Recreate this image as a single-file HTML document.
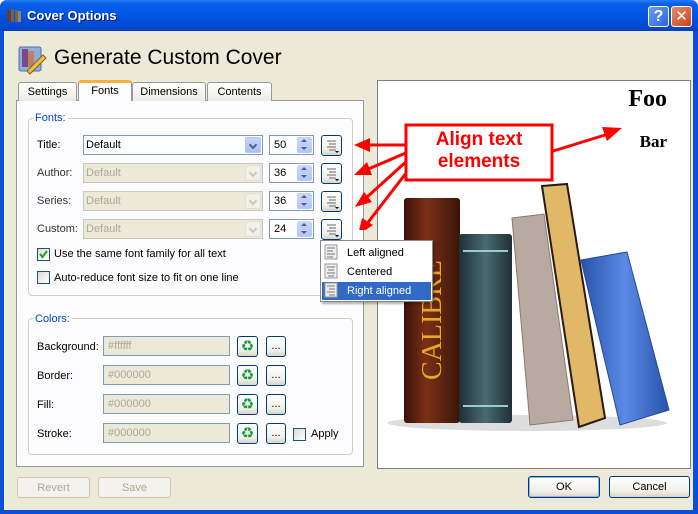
<!DOCTYPE html>
<html><head><meta charset="utf-8"><style>
*{margin:0;padding:0;box-sizing:border-box}
body{width:698px;height:514px;overflow:hidden;font-family:"Liberation Sans","DejaVu Sans",sans-serif;font-size:11px;background:#fff;position:relative}
.a{position:absolute}
.win{left:0;top:0;width:698px;height:514px;background:#0b4fd8;border-radius:7px 7px 0 0}
.tb{left:0;top:0;width:698px;height:31px;border-radius:7px 7px 0 0;background:linear-gradient(#2a7cf4 0,#0a5fe8 12%,#0054e3 50%,#0048d0 90%,#0a3fb8 100%)}
.body{left:4px;top:31px;width:689px;height:479px;background:#ECE9D8}
.lbl{color:#000;font-size:11px}
.cmb{height:20px;border:1px solid #7f9db9;background:#fff;font-size:11px;padding:3px 0 0 2px}
.cmb.d{background:#ECE9D8;color:#aca899;border-color:#c9c7ba}
.dd{position:absolute;right:1px;top:1px;width:16px;height:16px;border-radius:2px;background:linear-gradient(#c6d4fb,#a8bff5);border:1px solid #b4c8f6}
.dd::after{content:"";position:absolute;left:4px;top:4px;width:4px;height:4px;border-right:2px solid #4d6185;border-bottom:2px solid #4d6185;transform:rotate(45deg)}
.dd.d{background:#f0efe8;border-color:#e0dfd6}
.dd.d::after{border-color:#c9c7ba}
.spin{height:20px;border:1px solid #7f9db9;background:#fff;font-size:11px;padding:3px 0 0 4px}
.sb{position:absolute;right:1px;top:1px;width:15px;height:16px;background:linear-gradient(#cbd8fc,#b2c5f6);border-radius:2px}
.sb::before{content:"";position:absolute;left:4px;top:2px;border:3px solid transparent;border-bottom:3px solid #4d6185;border-top:none}
.sb::after{content:"";position:absolute;left:4px;top:10px;border:3px solid transparent;border-top:3px solid #4d6185;border-bottom:none}
.btn{border:1px solid #003c74;border-radius:3px;background:linear-gradient(#fff,#f0f0ea 70%,#d8d5c8);font-size:11px;text-align:center}
.btnd{border:1px solid #c9c7ba;border-radius:3px;background:#f3f2ec;color:#aca899;font-size:11px;text-align:center;padding-top:4px}
.grp{border:1px solid #d0d0bf;border-radius:4px}
.gl{background:#fcfcfe;color:#0046d5;padding:0 2px;font-size:11px}
.cb{width:13px;height:13px;border:1px solid #1c5180;background:linear-gradient(135deg,#dcdcd7,#fff)}
.txt{height:20px;border:1px solid #7f9db9;background:#ECE9D8;color:#aca899;padding:3px 0 0 4px}
</style></head><body>
<div class="a win"></div>
<div class="a tb"></div>
<div class="a" style="left:6px;top:7px;width:16px;height:16px">
<svg width="16" height="16"><rect x="1" y="3" width="3" height="12" fill="#6b3b22"/><rect x="5" y="2" width="3" height="13" fill="#8a5a30"/><rect x="9" y="3" width="3" height="12" fill="#5a6b6b"/><rect x="12" y="4" width="3" height="11" fill="#a88040"/></svg></div>
<div class="a" style="left:27px;top:8px;color:#fff;font-weight:bold;font-size:13px;text-shadow:1px 1px #0a1c6a">Cover Options</div>
<div class="a" style="left:648px;top:6px;width:21px;height:21px;border:1px solid #fff;border-radius:3px;background:linear-gradient(135deg,#6a9cf6,#2d63e0);color:#fff;font-weight:bold;font-size:16px;text-align:center;line-height:19px">?</div>
<div class="a" style="left:671px;top:6px;width:21px;height:21px;border:1px solid #fff;border-radius:3px;background:linear-gradient(135deg,#e88a6a,#c8431c);color:#fff;font-weight:bold;font-size:15px;text-align:center;line-height:19px">✕</div>
<div class="a body"></div>

<div class="a" style="left:17px;top:43px;width:30px;height:32px">
<svg width="30" height="32"><rect x="2" y="4" width="22" height="24" rx="2" fill="#8ab0e0" stroke="#5070a0"/><rect x="5" y="6" width="6" height="18" fill="#7a4a8a"/><rect x="11" y="8" width="6" height="16" fill="#c08060"/><path d="M10 28 L26 12 L29 15 L13 31 Z" fill="#f0c040" stroke="#806020"/></svg></div>
<div class="a" style="left:54px;top:46px;font-size:21px;color:#000">Generate Custom Cover</div>

<div class="a" style="left:16px;top:100px;width:348px;height:367px;background:#fcfcfe;border:1px solid #919b9c"></div>
<div class="a" style="left:18px;top:82px;width:59px;height:19px;border:1px solid #919b9c;border-bottom:none;border-radius:3px 3px 0 0;background:linear-gradient(#fff,#ecebe5);text-align:center;padding-top:3px">Settings</div>
<div class="a" style="left:78px;top:80px;width:54px;height:21px;border:1px solid #919b9c;border-top:3px solid #f8b040;border-bottom:none;border-radius:3px 3px 0 0;background:#fcfcfe;text-align:center;padding-top:2px">Fonts</div>
<div class="a" style="left:132px;top:82px;width:74px;height:19px;border:1px solid #919b9c;border-bottom:none;border-radius:3px 3px 0 0;background:linear-gradient(#fff,#ecebe5);text-align:center;padding-top:3px">Dimensions</div>
<div class="a" style="left:207px;top:82px;width:65px;height:19px;border:1px solid #919b9c;border-bottom:none;border-radius:3px 3px 0 0;background:linear-gradient(#fff,#ecebe5);text-align:center;padding-top:3px">Contents</div>

<div class="a grp" style="left:28px;top:118px;width:325px;height:178px"></div>
<div class="a gl" style="left:33px;top:112px">Fonts:</div>

<div class="a lbl" style="left:37px;top:139px">Title:</div>
<div class="a cmb" style="left:83px;top:135px;width:180px">Default<div class="dd"></div></div>
<div class="a lbl" style="left:37px;top:167px;color:#333">Author:</div>
<div class="a cmb d" style="left:83px;top:163px;width:180px">Default<div class="dd d"></div></div>
<div class="a lbl" style="left:37px;top:195px;color:#333">Series:</div>
<div class="a cmb d" style="left:83px;top:191px;width:180px">Default<div class="dd d"></div></div>
<div class="a lbl" style="left:37px;top:223px;color:#333">Custom:</div>
<div class="a cmb d" style="left:83px;top:219px;width:180px">Default<div class="dd d"></div></div>

<div class="a spin" style="left:269px;top:135px;width:45px">50<div class="sb"></div></div>
<div class="a spin" style="left:269px;top:163px;width:45px">36<div class="sb"></div></div>
<div class="a spin" style="left:269px;top:191px;width:45px">36<div class="sb"></div></div>
<div class="a spin" style="left:269px;top:219px;width:45px">24<div class="sb"></div></div>

<div class="a btn" style="left:321px;top:135px;width:21px;height:21px"><svg width="19" height="19"><g stroke="#666"><path d="M5 5h9M7 8h7M5 11h9M7 14h7"/></g><path d="M13 15h4l-2 2z" fill="#000"/></svg></div>
<div class="a btn" style="left:321px;top:163px;width:21px;height:21px"><svg width="19" height="19"><g stroke="#666"><path d="M5 5h9M7 8h7M5 11h9M7 14h7"/></g><path d="M13 15h4l-2 2z" fill="#000"/></svg></div>
<div class="a btn" style="left:321px;top:191px;width:21px;height:21px"><svg width="19" height="19"><g stroke="#666"><path d="M5 5h9M7 8h7M5 11h9M7 14h7"/></g><path d="M13 15h4l-2 2z" fill="#000"/></svg></div>
<div class="a btn" style="left:321px;top:219px;width:21px;height:21px"><svg width="19" height="19"><g stroke="#666"><path d="M5 5h9M7 8h7M5 11h9M7 14h7"/></g><path d="M13 15h4l-2 2z" fill="#000"/></svg></div>

<div class="a cb" style="left:37px;top:248px"><svg width="11" height="11"><path d="M2 5l2.5 3L9 2" stroke="#21a121" stroke-width="2" fill="none"/></svg></div>
<div class="a lbl" style="left:54px;top:248px">Use the same font family for all text</div>
<div class="a cb" style="left:37px;top:271px"></div>
<div class="a lbl" style="left:54px;top:272px">Auto-reduce font size to fit on one line</div>

<div class="a grp" style="left:28px;top:318px;width:325px;height:137px"></div>
<div class="a gl" style="left:33px;top:313px">Colors:</div>
<div class="a lbl" style="left:37px;top:341px">Background:</div>
<div class="a txt" style="left:103px;top:336px;width:127px">#ffffff</div>
<div class="a lbl" style="left:37px;top:370px">Border:</div>
<div class="a txt" style="left:103px;top:365px;width:127px">#000000</div>
<div class="a lbl" style="left:37px;top:399px">Fill:</div>
<div class="a txt" style="left:103px;top:394px;width:127px">#000000</div>
<div class="a lbl" style="left:37px;top:428px">Stroke:</div>
<div class="a txt" style="left:103px;top:423px;width:127px">#000000</div>

<div class="a btn" style="left:237px;top:336px;width:21px;height:21px;color:#1a9a3a;font-size:15px;line-height:19px">♻</div>
<div class="a btn" style="left:237px;top:365px;width:21px;height:21px;color:#1a9a3a;font-size:15px;line-height:19px">♻</div>
<div class="a btn" style="left:237px;top:394px;width:21px;height:21px;color:#1a9a3a;font-size:15px;line-height:19px">♻</div>
<div class="a btn" style="left:237px;top:423px;width:21px;height:21px;color:#1a9a3a;font-size:15px;line-height:19px">♻</div>
<div class="a btn" style="left:266px;top:336px;width:20px;height:21px;line-height:18px">...</div>
<div class="a btn" style="left:266px;top:365px;width:20px;height:21px;line-height:18px">...</div>
<div class="a btn" style="left:266px;top:394px;width:20px;height:21px;line-height:18px">...</div>
<div class="a btn" style="left:266px;top:423px;width:20px;height:21px;line-height:18px">...</div>
<div class="a cb" style="left:293px;top:428px"></div>
<div class="a lbl" style="left:311px;top:428px">Apply</div>

<div class="a btnd" style="left:17px;top:477px;width:73px;height:21px">Revert</div>
<div class="a btnd" style="left:98px;top:477px;width:73px;height:21px">Save</div>
<div class="a btn" style="left:528px;top:476px;width:72px;height:22px;padding-top:4px;border-color:#003c74;box-shadow:inset 0 0 0 1px #8cb4f2">OK</div>
<div class="a btn" style="left:609px;top:476px;width:81px;height:22px;padding-top:4px">Cancel</div>

<div class="a" style="left:377px;top:80px;width:314px;height:389px;background:#fff;border:1px solid #808080"></div>
<div class="a" style="left:600px;top:86px;width:67px;text-align:right;font-family:'Liberation Serif',serif;font-weight:bold;font-size:24px">Foo</div>
<div class="a" style="left:600px;top:132px;width:67px;text-align:right;font-family:'Liberation Serif',serif;font-weight:bold;font-size:17px">Bar</div>

<svg class="a" style="left:377px;top:80px" width="314" height="389">
<defs><linearGradient id="br" x1="0" x2="1"><stop offset="0" stop-color="#3a1408"/><stop offset=".4" stop-color="#7a3018"/><stop offset="1" stop-color="#3a1408"/></linearGradient>
<linearGradient id="tl" x1="0" x2="1"><stop offset="0" stop-color="#1e3036"/><stop offset=".5" stop-color="#4a6a72"/><stop offset="1" stop-color="#1e3036"/></linearGradient>
<linearGradient id="bl" x1="0" x2="1"><stop offset="0" stop-color="#2a52a8"/><stop offset=".5" stop-color="#5a8ae6"/><stop offset="1" stop-color="#2a52a8"/></linearGradient></defs>
<ellipse cx="150" cy="343" rx="140" ry="8" fill="#ddd"/>
<rect x="27" y="118" width="56" height="225" rx="3" fill="url(#br)"/>
<text x="0" y="0" transform="translate(64,300) rotate(-90)" font-family="Liberation Serif,serif" font-size="28" fill="#e8a820">CALIBRE</text>
<rect x="82" y="154" width="53" height="189" rx="3" fill="url(#tl)"/>
<rect x="86" y="170" width="45" height="2" fill="#9cc"/><rect x="86" y="325" width="45" height="2" fill="#9cc"/>
<polygon points="135,138 167,134 196,340 153,345" fill="#b8aaa0" stroke="#8a7a70"/>
<polygon points="165,106 190,104 228,338 202,347" fill="#e0b868" stroke="#2a1a10" stroke-width="2"/>
<polygon points="204,180 250,172 292,330 243,345" fill="url(#bl)" stroke="#234a9a"/>
</svg>

<div class="a" style="left:320px;top:240px;width:113px;height:62px;background:#fff;border:1px solid #888;box-shadow:2px 2px 2px rgba(0,0,0,.3)"></div>
<div class="a" style="left:322px;top:282px;width:109px;height:18px;background:#316AC5"></div>
<div class="a" style="left:347px;top:247px">Left aligned</div>
<div class="a" style="left:347px;top:266px">Centered</div>
<div class="a" style="left:347px;top:285px;color:#fff">Right aligned</div>
<svg class="a" style="left:324px;top:244px" width="16" height="56"><g fill="#eee" stroke="#999"><rect x="1" y="1" width="12" height="14"/><rect x="1" y="20" width="12" height="14"/><rect x="1" y="39" width="12" height="14"/></g><g stroke="#777"><path d="M3 4h8M3 7h6M3 10h8M3 13h6M3 23h8M4 26h6M3 29h8M4 32h6M3 42h8M5 45h6M3 48h8M5 51h6"/></g></svg>

<svg class="a" style="left:340px;top:110px" width="300" height="120">
<g stroke="#ff0000" stroke-width="3" fill="#ff0000">
<line x1="68" y1="35" x2="26" y2="35"/><polygon points="14,35 30,28 30,42" stroke="none"/>
<line x1="68" y1="42" x2="26" y2="60"/><polygon points="14,65 27,52 32,65" stroke="none"/>
<line x1="68" y1="50" x2="26" y2="88"/><polygon points="15,97 24,82 32,92" stroke="none"/>
<line x1="70" y1="58" x2="26" y2="115"/><polygon points="18,125 22,108 33,115" stroke="none"/>
<line x1="210" y1="42" x2="265" y2="25"/><polygon points="282,18 262,17 267,31" stroke="none"/>
</g>
<rect x="66" y="15" width="146" height="55" fill="#fff" stroke="#ff0000" stroke-width="3"/>
</svg>
<div class="a" style="left:406px;top:129px;width:146px;text-align:center;color:#ff0000;font-weight:bold;font-size:19px;line-height:22px">Align text<br>elements</div>
</body></html>
